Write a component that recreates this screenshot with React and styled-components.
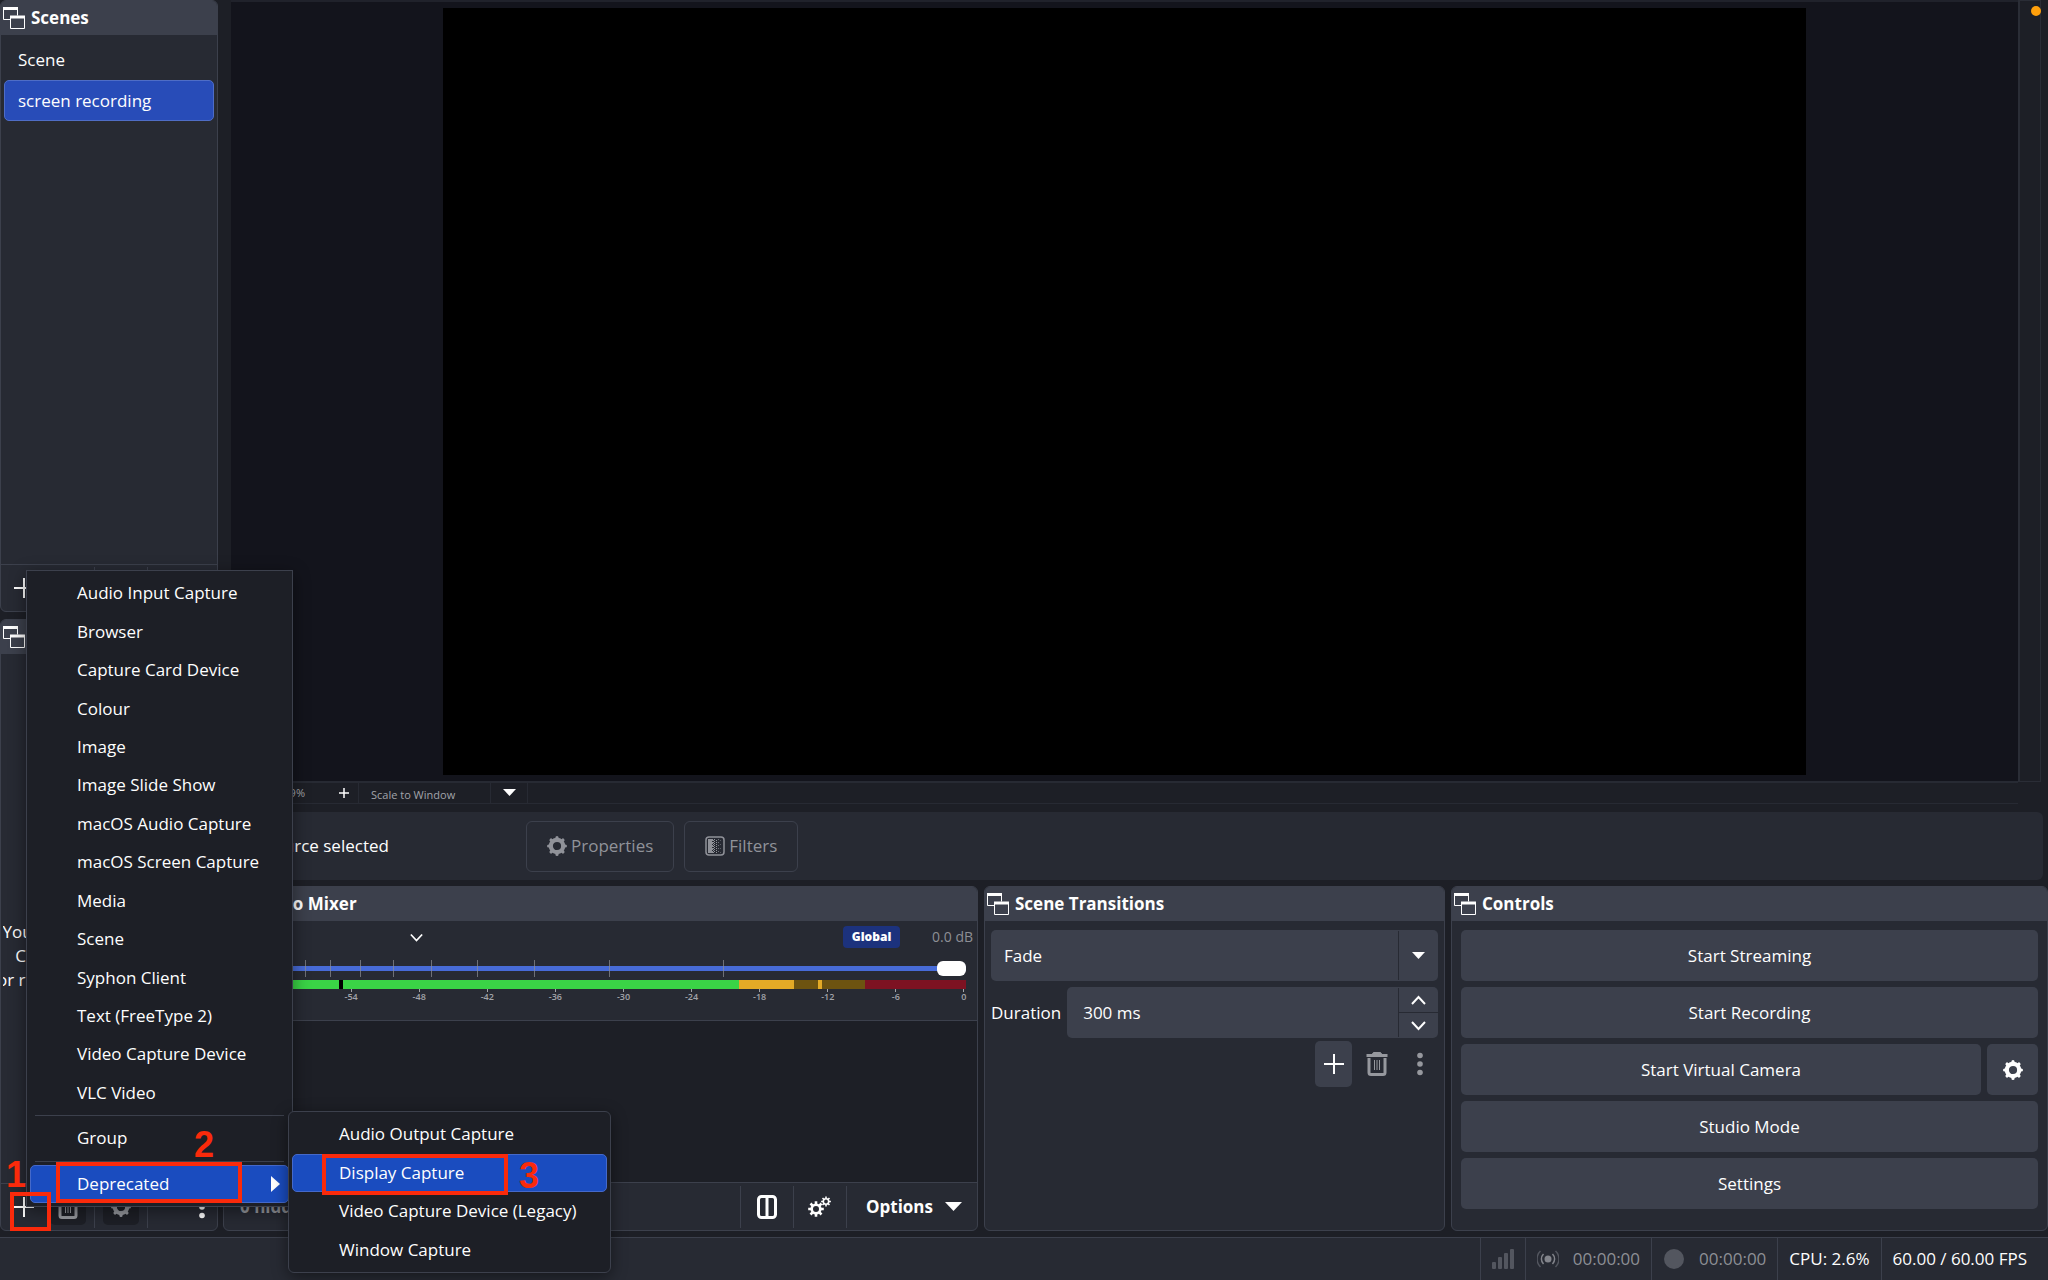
import React from "react";
import styled, { createGlobalStyle } from "styled-components";

const GlobalStyle = createGlobalStyle`
  * {
    box-sizing: border-box;
  }
  body {
    margin: 0;
    background: #1d1f26;
    color: #fefefe;
    font-family: "Open Sans", sans-serif;
    font-size: 17px;
    line-height: 24px;
  }
  button,
  input,
  select {
    font: inherit;
    color: inherit;
    margin: 0;
    border: 0;
    outline: 0;
    background: none;
  }
  ul {
    list-style: none;
    margin: 0;
    padding: 0;
  }
`;

const Window = styled.div`
  position: relative;
  min-height: 100vh;
  display: flex;
  flex-direction: column;
  gap: 6px;
  overflow: hidden;
`;

const Workspace = styled.div`
  flex: 1;
  display: flex;
  gap: 5px;
`;

const Sidebar = styled.aside`
  width: 218px;
  flex: none;
  display: flex;
  flex-direction: column;
  gap: 7px;
`;

const MainColumn = styled.main`
  flex: 1;
  min-width: 0;
  display: flex;
  flex-direction: column;
`;

const Panel = styled.section`
  flex: 1;
  min-width: 0;
  display: flex;
  flex-direction: column;
  background: #272a33;
  border: 1px solid #3c404c;
  border-radius: 6px;
  overflow: hidden;
`;

const PanelHeader = styled.header`
  height: 34px;
  flex: none;
  display: flex;
  align-items: center;
  gap: 6px;
  padding-left: 2px;
  background: #3c404c;

  h2 {
    margin: 0;
    font-size: 17px;
    font-weight: 700;
  }
`;

const SceneList = styled.ul`
  flex: 1;
  padding: 4px 3px;
`;

const SceneButton = styled.button`
  display: block;
  width: 100%;
  height: 41px;
  padding: 0 13px;
  text-align: left;
  border: 1px solid ${(p) => (p.$active ? "#4f6dc6" : "transparent")};
  border-radius: 5px;
  background: ${(p) => (p.$active ? "#284cb8" : "transparent")};
`;

const SourceHint = styled.p`
  flex: 1;
  margin: 0 2px;
  padding: 144px 0 70px 8px;
  display: flex;
  align-items: center;
  justify-content: center;
  white-space: pre;
  text-align: center;
  overflow: hidden;
`;

const Toolbar = styled.div`
  height: 48px;
  flex: none;
  display: flex;
  align-items: center;
  border-top: 1px solid #3c404c;
  padding: 0 3px 0 4px;
`;

const ListTools = styled(Toolbar)`
  height: 47px;
  padding: 0 1px 0 5px;
`;

const ToolButton = styled.button`
  width: ${(p) => (p.$narrow ? 28 : 36)}px;
  height: 36px;
  padding: 0;
  display: flex;
  align-items: center;
  justify-content: center;
  border-radius: 5px;
  color: ${(p) => (p.$dim ? "#96989e" : "#fefefe")};
  background: ${(p) => (p.$dark ? "#1d1f26" : "transparent")};
`;

const ToolGap = styled.span`
  width: 8px;
`;

const Divider = styled.span`
  width: 1px;
  height: 42px;
  margin: 0 8px;
  background: #3c404c;
`;

const Spacer = styled.span`
  flex: 1;
`;

const PreviewArea = styled.div`
  flex: 1;
  display: flex;
  margin: 0 7px 0 8px;
`;

const PreviewColumn = styled.div`
  flex: 1;
  display: flex;
  flex-direction: column;
`;

const PreviewStage = styled.div`
  flex: 1;
  display: flex;
  justify-content: center;
  padding: 6px 0;
  background: #13141c;
  border-top: 2px solid #20222b;
`;

const Canvas = styled.div`
  aspect-ratio: 16 / 9;
  background: #000;
`;

const PreviewScroll = styled.div`
  width: 23px;
  margin-bottom: 22px;
  border: 1px solid #2a2d36;
  border-left-width: 2px;
`;

const ZoomBar = styled.div`
  height: 23px;
  display: flex;
  align-items: stretch;
  font-size: 11px;
  color: #a2a4aa;
  border: solid #272a33;
  border-width: 2px 0 1px;
`;

const ZoomValue = styled.span`
  width: 98px;
  padding-right: 24px;
  text-align: right;
  line-height: 20px;
`;

const ZoomButton = styled.button`
  width: 30px;
  padding: 0;
  display: flex;
  align-items: center;
  justify-content: center;
  border-right: 1px solid #272a33;
  color: #fefefe;
`;

const ScaleField = styled.label`
  position: relative;
  width: 169px;
  border-right: 1px solid #272a33;

  select {
    appearance: none;
    width: 100%;
    height: 20px;
    line-height: 20px;
    padding: 0 12px;
  }
  svg {
    position: absolute;
    right: 11px;
    top: 6px;
    color: #fefefe;
    pointer-events: none;
  }
  &::after {
    content: "";
    position: absolute;
    right: 36px;
    top: 0;
    bottom: 0;
    border-left: 1px solid #272a33;
  }
`;

const ContextBar = styled.div`
  height: 68px;
  flex: none;
  display: flex;
  align-items: center;
  gap: 10px;
  margin: 8px 5px 6px 0;
  padding-left: 15px;
  background: #272a33;
  border-radius: 6px;
`;

const SourceName = styled.span`
  width: 278px;
`;

const OutlineButton = styled.button`
  height: 51px;
  padding: 0 20px;
  display: flex;
  align-items: center;
  gap: 4px;
  color: #909299;
  border: 1px solid #3c404c;
  border-radius: 6px;
`;

const Docks = styled.div`
  flex: none;
  display: grid;
  grid-template-columns: 755fr 461fr 597fr;
  gap: 6px;
`;

const Channel = styled.div`
  height: 100px;
  flex: none;
  padding-right: 4px;
  border-bottom: 1px solid #3c404c;
`;

const ChannelTop = styled.div`
  height: 32px;
  display: flex;
  align-items: center;
  padding-left: 174px;
`;

const Badge = styled.span`
  height: 22px;
  width: 57px;
  margin-right: 32px;
  text-align: center;
  font-size: 12px;
  line-height: 22px;
  font-weight: 800;
  border-radius: 4px;
  background: #1c327d;
`;

const Level = styled.span`
  font-size: 14px;
  color: #8d8f95;
`;

const Fader = styled.div`
  position: relative;
  height: 17px;
  margin: 7px 7px 3px 59px;

  svg {
    position: absolute;
    inset: 0;
    pointer-events: none;
  }
  input {
    appearance: none;
    display: block;
    width: 100%;
    height: 17px;
  }
  input::-webkit-slider-runnable-track {
    height: 5px;
    background: #476bd7;
  }
  input::-webkit-slider-thumb {
    appearance: none;
    position: relative;
    z-index: 1;
    width: 29px;
    height: 15px;
    margin-top: -5px;
    border-radius: 6px;
    background: #fff;
  }
`;

const Meter = styled.div`
  height: 9px;
  margin: 0 7px 0 59px;
  background: linear-gradient(
    to right,
    #3ad446 0 56px,
    #000 56px 60px,
    #3ad446 60px 66.8%,
    #e4aa26 66.8% 74.8%,
    #6d5310 74.8% 78.3%,
    #e4aa26 78.3% 78.9%,
    #6d5310 78.9% 85.2%,
    #7d1222 85.2%
  );
`;

const MeterScale = styled.div`
  display: flex;
  justify-content: space-between;
  margin: 0 9px 0 59px;
  font-size: 9px;
  line-height: 10px;
  font-weight: 600;
  color: #a2a4aa;

  span {
    width: 0;
    display: flex;
    flex-direction: column;
    align-items: center;
  }
  span::before {
    content: "";
    width: 1px;
    height: 3px;
    flex: none;
    background: #a2a4aa;
  }
`;

const MixerBody = styled.div`
  flex: 1;
  background: #1d1f26;
`;

const HiddenCount = styled.span`
  padding-left: 12px;
  font-weight: 700;
  color: #96989e;
`;

const OptionsButton = styled.button`
  display: flex;
  align-items: center;
  gap: 12px;
  padding: 0 12px 0 11px;
  font-weight: 700;
`;

const DockForm = styled.div`
  display: flex;
  flex-direction: column;
  gap: 6px;
  padding: 9px 6px 21px;
`;

const FieldRow = styled.div`
  display: flex;
  align-items: center;
  gap: 6px;
`;

const FieldBox = styled.div`
  position: relative;
  flex: 1 0 auto;
  height: 51px;
  display: flex;
  border-radius: 5px;
  background: #3c404c;

  select,
  input {
    appearance: none;
    flex: 1;
    min-width: 0;
    padding: 0 13px;
  }
  input {
    padding: 0 16px;
  }
`;

const SelectArrow = styled.span`
  position: absolute;
  right: 0;
  top: 1px;
  bottom: 1px;
  width: 40px;
  display: flex;
  align-items: center;
  justify-content: center;
  border-left: 1px solid #272a33;
  pointer-events: none;
`;

const SpinButtons = styled.div`
  width: 40px;
  margin: 1px 0;
  display: flex;
  flex-direction: column;
  border-left: 1px solid #272a33;

  button {
    flex: 1;
    padding: 0;
    display: flex;
    align-items: center;
    justify-content: center;
  }
  button + button {
    border-top: 1px solid #272a33;
  }
`;

const TransitionTools = styled.div`
  display: flex;
  justify-content: flex-end;
  gap: 6px;
  margin-top: -3px;
`;

const TransitionButton = styled.button`
  width: 37px;
  height: 46px;
  padding: 0;
  display: flex;
  align-items: center;
  justify-content: center;
  border-radius: 5px;
  color: ${(p) => (p.$on ? "#fefefe" : "#96989e")};
  background: ${(p) => (p.$on ? "#3c404c" : "transparent")};
`;

const ControlsForm = styled(DockForm)`
  padding: 9px 9px 21px;
`;

const ControlButton = styled.button`
  flex: 1 0 auto;
  height: 51px;
  display: flex;
  align-items: center;
  justify-content: center;
  border-radius: 5px;
  background: #3c404c;
`;

const GearButton = styled(ControlButton)`
  flex: none;
  width: 51px;
  padding: 0;
`;

const StatusBar = styled.footer`
  height: 43px;
  flex: none;
  display: flex;
  justify-content: flex-end;
  background: #272a33;
  border-top: 1px solid #3c404c;
  padding-right: 10px;
`;

const StatusCell = styled.div`
  display: flex;
  align-items: center;
  gap: 14px;
  padding: 0 11px;
  border-left: 1px solid #3c404c;
  color: ${(p) => (p.$dim ? "#8d8f95" : "#fefefe")};
`;

const Menu = styled.ul`
  position: absolute;
  display: flex;
  flex-direction: column;
  padding: 3px;
  background: #1d1f26;
  border: 1px solid #3c404c;
  box-shadow: 0 4px 16px rgba(0, 0, 0, 0.45);
`;

const SourceMenu = styled(Menu)`
  left: 26px;
  top: 570px;
  bottom: 73px;
  width: 267px;
`;

const DeprecatedMenu = styled(Menu)`
  left: 288px;
  top: 1111px;
  bottom: 7px;
  width: 323px;
  border-radius: 6px;
`;

const MenuRow = styled.li`
  flex: 1;
  display: flex;
`;

const MenuItem = styled.button`
  flex: 1;
  display: flex;
  align-items: center;
  justify-content: space-between;
  padding: 0 8px 0 46px;
  text-align: left;
  border: 1px solid ${(p) => (p.$active ? "#4569c9" : "transparent")};
  border-radius: 5px;
  background: ${(p) => (p.$active ? "#1a4cbf" : "transparent")};
`;

const MenuSeparator = styled.li`
  flex: none;
  height: 1px;
  margin: 3px 5px;
  background: #3c404c;
`;

const Mark = styled.div`
  position: absolute;
  left: ${(p) => p.$x}px;
  top: ${(p) => p.$y}px;
  width: ${(p) => p.$w}px;
  height: ${(p) => p.$h}px;
  border: 4px solid #fa2a0b;
  pointer-events: none;
`;

const MarkNumber = styled.span`
  position: absolute;
  left: ${(p) => p.$x}px;
  top: ${(p) => p.$y}px;
  color: #fa2a0b;
  font: 700 36px/36px "Liberation Sans", sans-serif;
  pointer-events: none;
`;

const MicDot = styled.span`
  position: absolute;
  top: 6px;
  right: 7px;
  width: 10px;
  height: 10px;
  border-radius: 50%;
  background: #fe9f0b;
`;

const DockIcon = () => (
  <svg width="22" height="22" viewBox="0 0 22 22" fill="none" stroke="#fefefe">
    <path d="M7 12.5H.5V.5h14v8" />
    <path d="M0 1.5h15" strokeWidth="3" />
    <path d="M7.5 9.5h14v12h-14z" />
    <path d="M7 10h15" strokeWidth="3" />
  </svg>
);

const PlusIcon = ({ size = 20, stroke = 2 }) => (
  <svg width={size} height={size} viewBox="0 0 20 20" stroke="currentColor">
    <path d="M10 0v20M0 10h20" strokeWidth={stroke} />
  </svg>
);

const TrashIcon = () => (
  <svg width="22" height="24" viewBox="0 0 22 24" fill="none" stroke="currentColor">
    <path d="M.5 3.5h21" strokeWidth="3" />
    <path d="M6 2.500l1.500-2h7l1.500 2z" fill="currentColor" />
    <path d="M3 6v14.500a2 2 0 0 0 2 2h12a2 2 0 0 0 2-2V6" strokeWidth="3" />
    <path d="M8.500 8v10M11 8v10M13.500 8v10" strokeWidth="1" />
  </svg>
);

const GearIcon = ({ size = 20 }) => (
  <svg width={size} height={size} viewBox="0 0 20 20" fill="none" stroke="currentColor">
    <circle cx="10" cy="10" r="6.200" strokeWidth="4.200" />
    {[0, 45, 90, 135].map((a) => (
      <path
        key={a}
        d="M10 1.600v2M10 16.400v2"
        strokeWidth="3.200"
        strokeLinecap="round"
        transform={`rotate(${a} 10 10)`}
      />
    ))}
  </svg>
);

const SmallGears = () => (
  <svg width="24" height="21" viewBox="0 0 24 21" fill="none" stroke="currentColor">
    <circle cx="8" cy="13" r="4.300" strokeWidth="2.600" />
    <circle cx="18" cy="5.500" r="2.700" strokeWidth="1.600" />
    {[0, 45, 90, 135].map((a) => (
      <g key={a}>
        <path d="M8 5.200v3M8 17.800v3" strokeWidth="2.600" transform={`rotate(${a} 8 13)`} />
        <path d="M18 .6v2M18 8.400v2" strokeWidth="1.600" transform={`rotate(${a} 18 5.500)`} />
      </g>
    ))}
  </svg>
);

const DotsIcon = () => (
  <svg width="6" height="24" viewBox="0 0 6 24" fill="currentColor">
    <circle cx="3" cy="3.500" r="2.800" />
    <circle cx="3" cy="12" r="2.800" />
    <circle cx="3" cy="20.500" r="2.800" />
  </svg>
);

const Triangle = ({ w = 13, h = 7 }) => (
  <svg width={w} height={h} viewBox="0 0 10 6" preserveAspectRatio="none" fill="currentColor">
    <path d="M0 0h10L5 6z" />
  </svg>
);

const Chevron = ({ up, size = 15 }) => (
  <svg width={size} height={size} viewBox="0 0 15 15" fill="none" stroke="currentColor" strokeWidth="2">
    <path d={up ? "M1 11l6.500-7L14 11" : "M1 4l6.500 7L14 4"} />
  </svg>
);

const FilterIcon = () => (
  <svg width="20" height="20" viewBox="0 0 20 20" fill="none" stroke="currentColor">
    <rect x="1" y="1" width="18" height="18" rx="3" strokeWidth="1.500" />
    <path d="M3 3h4v14H3z" fill="currentColor" stroke="none" />
    <path d="M7.500 3v14" strokeDasharray="2 1" />
    <path d="M8.500 4v13" strokeDasharray="1 1" />
    <path d="M9.500 3v14" strokeDasharray="1 1" />
    <path d="M11.500 4v13" strokeDasharray="1 1" />
    <path d="M13.500 3v14" strokeDasharray="1 2" opacity=".7" />
    <path d="M15.500 4v13" strokeDasharray="1 3" opacity=".5" />
  </svg>
);

const LayoutIcon = () => (
  <svg width="20" height="24" viewBox="0 0 20 24" fill="none" stroke="currentColor" strokeWidth="3">
    <rect x="1.500" y="1.500" width="17" height="21" rx="3" />
    <path d="M10 2v20" />
  </svg>
);

const SignalIcon = () => (
  <svg width="22" height="20" viewBox="0 0 22 20" fill="#53565f">
    <rect y="13" width="4" height="7" rx="1" />
    <rect x="6" y="8" width="4" height="12" rx="1" />
    <rect x="12" y="4" width="4" height="16" rx="1" />
    <rect x="18" width="4" height="20" rx="1" />
  </svg>
);

const BroadcastIcon = () => (
  <svg width="22" height="18" viewBox="0 0 22 18" fill="none" stroke="#53565f" strokeWidth="1.500">
    <circle cx="11" cy="9" r="3.500" fill="#83858c" stroke="none" />
    <path d="M6.500 4a7 7 0 0 0 0 10M15.500 4a7 7 0 0 1 0 10" stroke="#83858c" />
    <path d="M3.500 1a11 11 0 0 0 0 16M18.500 1a11 11 0 0 1 0 16" />
  </svg>
);

const RecordIcon = () => (
  <svg width="22" height="20" viewBox="0 0 22 20">
    <circle cx="11" cy="10" r="10" fill="#53565f" />
  </svg>
);

const faderTicks = [22, 47, 77, 110, 148, 194, 251, 326, 440];
const meterMarks = ["", -54, -48, -42, -36, -30, -24, -18, -12, -6, 0];

const sourceTypes = [
  "Audio Input Capture",
  "Browser",
  "Capture Card Device",
  "Colour",
  "Image",
  "Image Slide Show",
  "macOS Audio Capture",
  "macOS Screen Capture",
  "Media",
  "Scene",
  "Syphon Client",
  "Text (FreeType 2)",
  "Video Capture Device",
  "VLC Video",
];

const deprecatedTypes = [
  "Audio Output Capture",
  "Display Capture",
  "Video Capture Device (Legacy)",
  "Window Capture",
];

function Dock({ title, children }) {
  return (
    <Panel>
      <PanelHeader>
        <DockIcon />
        <h2>{title}</h2>
      </PanelHeader>
      {children}
    </Panel>
  );
}

function ListToolbar() {
  return (
    <ListTools>
      <ToolButton aria-label="Add">
        <PlusIcon />
      </ToolButton>
      <ToolGap />
      <ToolButton aria-label="Remove" $dim $dark>
        <TrashIcon />
      </ToolButton>
      <Divider />
      <ToolButton aria-label="Properties" $dim $dark>
        <GearIcon />
      </ToolButton>
      <Divider />
      <Spacer />
      <ToolButton aria-label="More" $narrow>
        <DotsIcon />
      </ToolButton>
    </ListTools>
  );
}

function AudioMixer() {
  return (
    <Dock title="Audio Mixer">
      <Channel>
        <ChannelTop>
          <ToolButton aria-label="Channel menu">
            <Chevron size={13} />
          </ToolButton>
          <Spacer />
          <Badge>Global</Badge>
          <Level>0.0 dB</Level>
        </ChannelTop>
        <Fader>
          <input type="range" aria-label="Volume" defaultValue="100" />
          <svg width="100%" height="17" viewBox="0 0 683 17" preserveAspectRatio="none">
            {faderTicks.map((x) => (
              <path key={x} d={`M${x + 0.5} 0v17`} stroke="#8d8f95" opacity=".7" />
            ))}
          </svg>
        </Fader>
        <Meter />
        <MeterScale>
          {meterMarks.map((m) => (
            <span key={m}>{m}</span>
          ))}
        </MeterScale>
      </Channel>
      <MixerBody />
      <Toolbar>
        <HiddenCount>0 hidden</HiddenCount>
        <Spacer />
        <Divider />
        <ToolButton aria-label="Toggle layout">
          <LayoutIcon />
        </ToolButton>
        <Divider />
        <ToolButton aria-label="Advanced audio">
          <SmallGears />
        </ToolButton>
        <Divider />
        <OptionsButton>
          Options
          <Triangle w={17} h={9} />
        </OptionsButton>
      </Toolbar>
    </Dock>
  );
}

function SceneTransitions() {
  return (
    <Dock title="Scene Transitions">
      <DockForm>
        <FieldBox>
          <select aria-label="Transition" defaultValue="Fade">
            <option>Fade</option>
          </select>
          <SelectArrow>
            <Triangle />
          </SelectArrow>
        </FieldBox>
        <FieldRow>
          <label htmlFor="duration">Duration</label>
          <FieldBox>
            <input id="duration" defaultValue="300 ms" />
            <SpinButtons>
              <button aria-label="Increase">
                <Chevron up />
              </button>
              <button aria-label="Decrease">
                <Chevron />
              </button>
            </SpinButtons>
          </FieldBox>
        </FieldRow>
        <TransitionTools>
          <TransitionButton aria-label="Add transition" $on>
            <PlusIcon />
          </TransitionButton>
          <TransitionButton aria-label="Remove transition">
            <TrashIcon />
          </TransitionButton>
          <TransitionButton aria-label="Transition options">
            <DotsIcon />
          </TransitionButton>
        </TransitionTools>
      </DockForm>
    </Dock>
  );
}

function Controls() {
  return (
    <Dock title="Controls">
      <ControlsForm>
        <ControlButton>Start Streaming</ControlButton>
        <ControlButton>Start Recording</ControlButton>
        <FieldRow>
          <ControlButton>Start Virtual Camera</ControlButton>
          <GearButton aria-label="Configure virtual camera">
            <GearIcon />
          </GearButton>
        </FieldRow>
        <ControlButton>Studio Mode</ControlButton>
        <ControlButton>Settings</ControlButton>
      </ControlsForm>
    </Dock>
  );
}

export default function App() {
  return (
    <Window>
      <GlobalStyle />
      <Workspace>
        <Sidebar>
          <Dock title="Scenes">
            <SceneList>
              <li>
                <SceneButton>Scene</SceneButton>
              </li>
              <li>
                <SceneButton $active>screen recording</SceneButton>
              </li>
            </SceneList>
            <ListToolbar />
          </Dock>
          <Dock title="Sources">
            <SourceHint>
              {"You don't have any sources.\nClick the + button below,\nor right click here to add one."}
            </SourceHint>
            <ListToolbar />
          </Dock>
        </Sidebar>
        <MainColumn>
          <PreviewArea>
            <PreviewColumn>
              <PreviewStage>
                <Canvas />
              </PreviewStage>
              <ZoomBar>
                <ZoomValue>39%</ZoomValue>
                <ZoomButton aria-label="Zoom in">
                  <PlusIcon size={10} stroke={3} />
                </ZoomButton>
                <ScaleField>
                  <select aria-label="Preview scale" defaultValue="Scale to Window">
                    <option>Scale to Window</option>
                  </select>
                  <Triangle />
                </ScaleField>
              </ZoomBar>
            </PreviewColumn>
            <PreviewScroll />
          </PreviewArea>
          <ContextBar>
            <SourceName>No source selected</SourceName>
            <OutlineButton>
              <GearIcon />
              Properties
            </OutlineButton>
            <OutlineButton>
              <FilterIcon />
              Filters
            </OutlineButton>
          </ContextBar>
          <Docks>
            <AudioMixer />
            <SceneTransitions />
            <Controls />
          </Docks>
        </MainColumn>
      </Workspace>
      <StatusBar>
        <StatusCell>
          <SignalIcon />
        </StatusCell>
        <StatusCell $dim>
          <BroadcastIcon />
          00:00:00
        </StatusCell>
        <StatusCell $dim>
          <RecordIcon />
          00:00:00
        </StatusCell>
        <StatusCell>CPU: 2.6%</StatusCell>
        <StatusCell>60.00 / 60.00 FPS</StatusCell>
      </StatusBar>

      <SourceMenu role="menu">
        {sourceTypes.map((name) => (
          <MenuRow key={name}>
            <MenuItem role="menuitem">{name}</MenuItem>
          </MenuRow>
        ))}
        <MenuSeparator role="separator" />
        <MenuRow>
          <MenuItem role="menuitem">Group</MenuItem>
        </MenuRow>
        <MenuSeparator role="separator" />
        <MenuRow>
          <MenuItem role="menuitem" $active>
            Deprecated
            <svg width="9" height="16" viewBox="0 0 9 16" fill="#fefefe">
              <path d="M0 0l9 8-9 8z" />
            </svg>
          </MenuItem>
        </MenuRow>
      </SourceMenu>
      <DeprecatedMenu role="menu">
        {deprecatedTypes.map((name) => (
          <MenuRow key={name}>
            <MenuItem role="menuitem" $active={name === "Display Capture"}>
              {name}
            </MenuItem>
          </MenuRow>
        ))}
      </DeprecatedMenu>

      <Mark $x={10} $y={1192} $w={41} $h={39} />
      <Mark $x={56} $y={1162} $w={186} $h={41} />
      <Mark $x={322} $y={1154} $w={186} $h={41} />
      <MarkNumber $x={6} $y={1157}>1</MarkNumber>
      <MarkNumber $x={194} $y={1127}>2</MarkNumber>
      <MarkNumber $x={519} $y={1158}>3</MarkNumber>
      <MicDot />
    </Window>
  );
}
